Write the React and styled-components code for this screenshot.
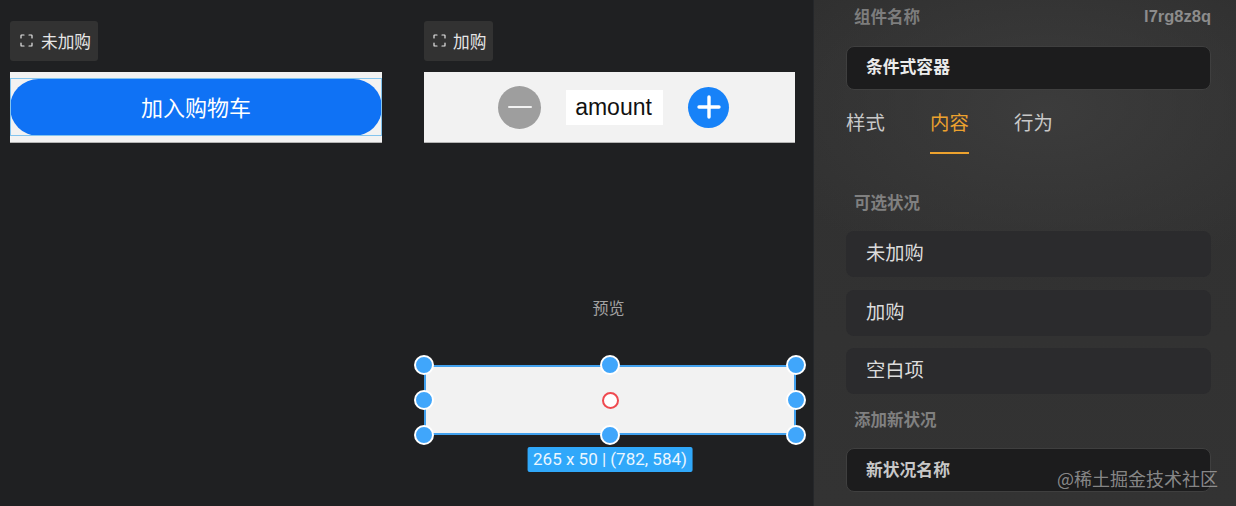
import React from "react";
import styled, { createGlobalStyle } from "styled-components";

const Global = createGlobalStyle`
  html, body { margin: 0; padding: 0; background: #1f2022; }
  body { font-family: "Noto Sans CJK SC", "Noto Sans", sans-serif; }
  * { box-sizing: border-box; }
`;

const Page = styled.div`
  position: relative;
  width: 1236px;
  height: 506px;
  overflow: hidden;
  display: flex;
  background: #1f2022;
`;

const Canvas = styled.main`
  width: 813px;
  flex: none;
  display: flex;
  flex-direction: column;
  padding: 21px 0 0 10px;
`;

const Variants = styled.div`
  display: flex;
  gap: 42px;
`;

const Variant = styled.section`
  width: 372px;
  display: flex;
  flex-direction: column;
  align-items: flex-start;
  gap: 11px;
`;

const Chip = styled.div`
  height: 40px;
  padding: 0 7px 1px ${p => p.$tight ? 9 : 10}px;
  display: flex;
  align-items: center;
  gap: ${p => p.$tight ? 7 : 8}px;
  border-radius: 3px;
  background: #323232;
  color: #e6e6e6;
  font-size: 16.7px;
`;

const Stage = styled.div`
  width: ${p => p.$w || 372}px;
  height: 71px;
  background: #f2f2f2;
  border-bottom: 1px solid #b4b4b4;
  display: flex;
  align-items: center;
  justify-content: center;
  position: relative;
`;

const CartButton = styled.div`
  width: 100%;
  height: 57px;
  padding-bottom: 3px;
  border-radius: 29px;
  background: #0f72f5;
  color: #fff;
  font-size: 22px;
  display: flex;
  align-items: center;
  justify-content: center;
`;

const GuideBox = styled.div`
  position: absolute;
  left: 0;
  right: 0;
  top: 6px;
  height: 58px;
  border: 1px solid #83c4ee;
  pointer-events: none;
`;

const Stepper = styled.div`
  display: flex;
  align-items: center;
  gap: 25px;
  padding-left: 8px;
`;

const RoundBtn = styled.div`
  width: ${p => p.$size}px;
  height: ${p => p.$size}px;
  border-radius: 50%;
  background: ${p => p.$bg};
  display: flex;
  align-items: center;
  justify-content: center;
`;

const Amount = styled.div`
  width: 97px;
  height: 35px;
  padding: 1px 2px 0 0;
  background: #fff;
  color: #111;
  font-family: "Liberation Sans", sans-serif;
  font-size: 23px;
  display: flex;
  align-items: center;
  justify-content: center;
`;

const Preview = styled.section`
  margin-top: 153px;
  margin-left: 414px;
  width: 372px;
  display: flex;
  flex-direction: column;
  align-items: center;
`;

const PreviewTitle = styled.div`
  width: 369px;
  margin-right: 3px;
  text-align: center;
  color: #a3a3a3;
  font-size: 16px;
  line-height: 22px;
  margin-bottom: 47px;
`;

const Selection = styled.div`
  position: relative;
  width: 372px;
  height: 70px;
  background: #f2f2f2;
  box-shadow: inset 0 0 0 2px #42a1ee;
`;

const Handle = styled.span`
  position: absolute;
  width: 20px;
  height: 20px;
  margin: -10px 0 0 -10px;
  border-radius: 50%;
  border: 2.5px solid #fff;
  background: #40a6fb;
  left: ${p => p.$x}%;
  top: ${p => p.$y}%;
`;

const Pivot = styled.span`
  position: absolute;
  left: 50%;
  top: 50%;
  width: 17px;
  height: 17px;
  margin: -8.5px 0 0 -8.5px;
  border-radius: 50%;
  background: #fff;
  border: 2px solid #ef4a50;
`;

const SizeTag = styled.div`
  position: absolute;
  left: 50%;
  top: 82px;
  transform: translateX(-50%);
  height: 25px;
  padding: 0 5.5px;
  border-radius: 2px;
  background: #30a8fa;
  color: #eaf6ff;
  font-family: Roboto, sans-serif;
  font-size: 17px;
  line-height: 25px;
  white-space: nowrap;
`;

const Panel = styled.aside`
  flex: 1;
  padding: 0 25px 0 32px;
  border-left: 1px solid #25272a;
  background:
    radial-gradient(ellipse 300px 170px at 55% 110px, #3c3c3c 0%, rgba(60,60,60,0) 100%),
    linear-gradient(180deg, #303030 0%, #333 100%);
  display: flex;
  flex-direction: column;
`;

const HeadRow = styled.div`
  height: 34px;
  padding: 0 0 2px 8px;
  display: flex;
  align-items: center;
  justify-content: space-between;
  color: #7d7d7d;
  font-size: 16.5px;
  font-weight: 700;
  margin-bottom: 12px;
`;

const Uid = styled.span`
  font-family: "Liberation Sans", sans-serif;
  font-size: 16.5px;
  color: #8c8c8c;
`;

const Field = styled.div`
  height: 44px;
  border-radius: 8px;
  background: #1c1c1d;
  border: 1px solid #3f3f3f;
  padding: 0 19px ${p => p.$dim ? 3 : 5}px;
  display: flex;
  align-items: center;
  color: ${p => p.$dim ? "#c8c8c8" : "#ececec"};
  font-size: 16.8px;
  font-weight: 700;
`;

const Tabs = styled.nav`
  display: flex;
  gap: 45px;
  margin-top: 16px;
  height: 48px;
`;

const Tab = styled.div`
  width: 39px;
  height: 48px;
  text-align: center;
  font-size: 19.4px;
  line-height: 31px;
  white-space: nowrap;
  color: ${p => p.$active ? "#eda22e" : "#c9c9c9"};
  border-bottom: 2px solid ${p => p.$active ? "#eda22e" : "transparent"};
`;

const SectionTitle = styled.div`
  padding-left: 8px;
  height: 24px;
  line-height: 22px;
  color: #808080;
  font-size: 16.5px;
  font-weight: 700;
  margin-top: ${p => p.$top || 0}px;
  margin-bottom: 16px;
`;

const StateRow = styled.div`
  height: 46px;
  margin-bottom: ${p => p.$gap}px;
  border-radius: 8px;
  background: #2b2b2d;
  padding: 0 20px 4px;
  display: flex;
  align-items: center;
  color: #dcdcdc;
  font-size: 19.3px;
`;

const Watermark = styled.div`
  position: absolute;
  right: 18px;
  top: 465px;
  color: rgba(205, 205, 205, 0.62);
  font-size: 18px;
  line-height: 26px;
  white-space: nowrap;
`;

const FrameIcon = () => (
  <svg width="13" height="13" viewBox="0 0 13 13" fill="none" stroke="#e6e6e6" strokeWidth="1.2" strokeLinecap="round">
    <path d="M1 4V1.6C1 1.3 1.3 1 1.6 1H4" />
    <path d="M9 1h2.4c.3 0 .6.3.6.6V4" />
    <path d="M12 9v2.4c0 .3-.3.6-.6.6H9" />
    <path d="M4 12H1.6c-.3 0-.6-.3-.6-.6V9" />
  </svg>
);

const handles = [[0,0],[50,0],[100,0],[0,50],[100,50],[0,100],[50,100],[100,100]];

export default function App() {
  return (
    <Page>
      <Global />
      <Canvas>
        <Variants>
          <Variant>
            <Chip><FrameIcon />未加购</Chip>
            <Stage>
              <CartButton>加入购物车</CartButton>
              <GuideBox />
            </Stage>
          </Variant>
          <Variant>
            <Chip $tight><FrameIcon />加购</Chip>
            <Stage $w={371}>
              <Stepper>
                <RoundBtn $size={43} $bg="#9e9e9e">
                  <svg width="24" height="4" viewBox="0 0 24 4"><path d="M1 2h22" stroke="#f2f2f2" strokeWidth="2" strokeLinecap="round" /></svg>
                </RoundBtn>
                <Amount>amount</Amount>
                <RoundBtn $size={41} $bg="#1782f8">
                  <svg width="24" height="24" viewBox="0 0 24 24"><path d="M2 12h20M12 2v20" stroke="#fff" strokeWidth="3.4" strokeLinecap="round" /></svg>
                </RoundBtn>
              </Stepper>
            </Stage>
          </Variant>
        </Variants>
        <Preview>
          <PreviewTitle>预览</PreviewTitle>
          <Selection>
            {handles.map(([x, y]) => <Handle key={`${x}-${y}`} $x={x} $y={y} />)}
            <Pivot />
            <SizeTag>265 x 50 | (782, 584)</SizeTag>
          </Selection>
        </Preview>
      </Canvas>
      <Panel>
        <HeadRow>组件名称<Uid>l7rg8z8q</Uid></HeadRow>
        <Field>条件式容器</Field>
        <Tabs>
          <Tab>样式</Tab>
          <Tab $active>内容</Tab>
          <Tab>行为</Tab>
        </Tabs>
        <SectionTitle $top={37}>可选状况</SectionTitle>
        <StateRow $gap={13}>未加购</StateRow>
        <StateRow $gap={12}>加购</StateRow>
        <StateRow $gap={14}>空白项</StateRow>
        <SectionTitle>添加新状况</SectionTitle>
        <Field $dim>新状况名称</Field>
      </Panel>
      <Watermark>@稀土掘金技术社区</Watermark>
    </Page>
  );
}
